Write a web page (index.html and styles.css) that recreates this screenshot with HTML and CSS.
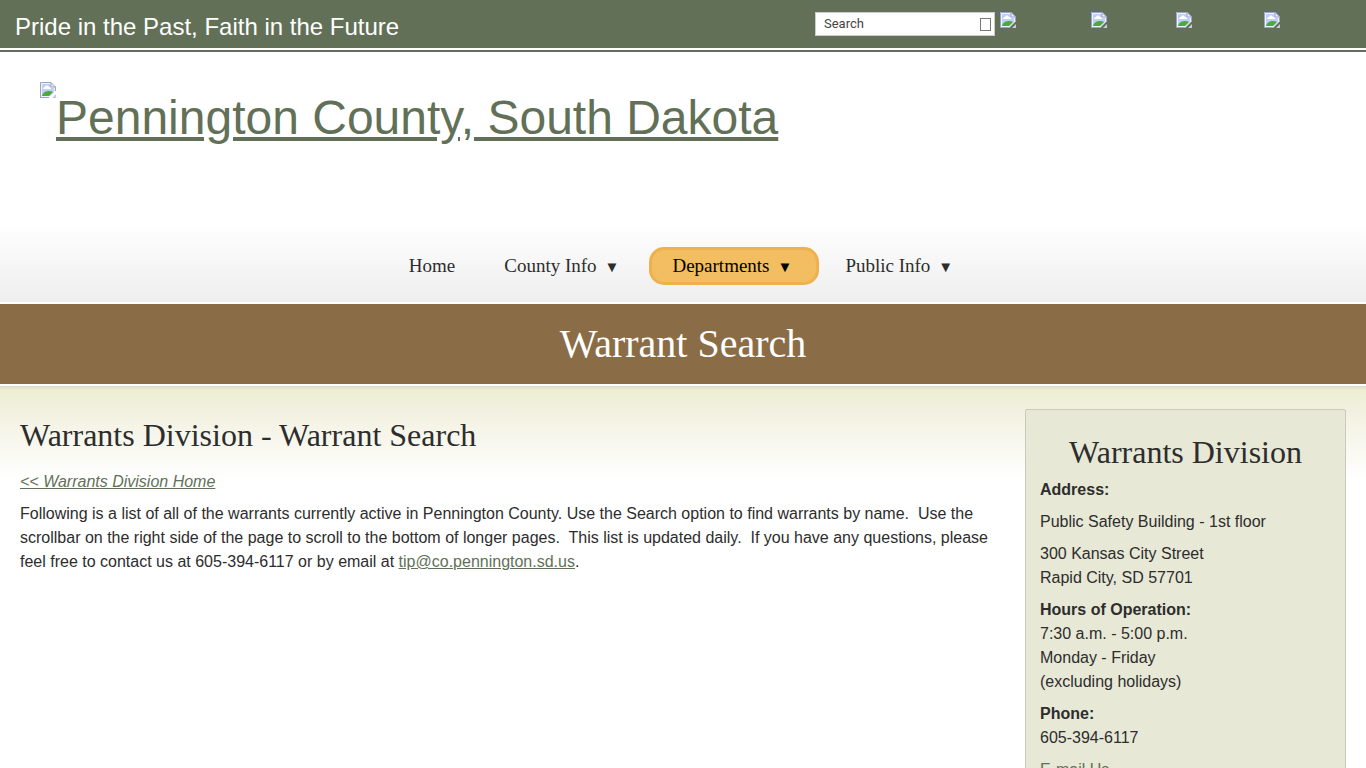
FILE: index.html
```html
<!DOCTYPE html>
<html lang="en">
<head>
    <meta charset="UTF-8">
    <meta name="viewport" content="width=device-width, initial-scale=1.0">
    <title>Warrant Search - Pennington County, South Dakota</title>
    <link rel="stylesheet" href="styles.css">
</head>
<body>
    <svg class="defs" aria-hidden="true">
        <symbol id="picture" viewBox="0 0 16 16">
            <path d="M0 0h11l5 5v4l-7 7H0z" fill="#f1f4fb"/>
            <path d="M2 2h9v4h3v4l-4 4H2z" fill="#c0d0f5"/>
            <path d="M3 7c0-1 1-2 2-2 1-2 3-2 4 0 1 0 2 1 2 2z" fill="#fff"/>
            <path d="M2 14c0-2 3-5 6-5 2 0 4 0 5 1l-4 4z" fill="#4fa83f"/>
            <path d="M.5 16V.5H11L15.500 5H11V.5M15.500 5v4M0 15.500h9" fill="none" stroke="#9aa3c4"/>
            <path d="M12 16l4-4v4z" fill="#c3cbdc"/>
        </symbol>
    </svg>

    <div class="topbar">
        <p class="slogan">Pride in the Past, Faith in the Future</p>
        <div class="tools">
            <form class="search">
                <input type="text" placeholder="Search" aria-label="Search">
                <button type="submit" aria-label="Go"><span class="glyph"></span></button>
            </form>
            <div class="social">
                <a href="#" aria-label="Facebook"><svg class="pic"><use href="#picture"/></svg></a>
                <a href="#" aria-label="Twitter"><svg class="pic"><use href="#picture"/></svg></a>
                <a href="#" aria-label="YouTube"><svg class="pic"><use href="#picture"/></svg></a>
                <a href="#" aria-label="Contact"><svg class="pic"><use href="#picture"/></svg></a>
            </div>
        </div>
    </div>

    <header class="header">
        <a class="logo" href="#"><svg class="pic"><use href="#picture"/></svg><span>Pennington County, South Dakota</span></a>
        <nav class="menu">
            <a href="#">Home</a>
            <a href="#">County Info<span class="arrow">▼</span></a>
            <a href="#" class="active">Departments<span class="arrow">▼</span></a>
            <a href="#">Public Info<span class="arrow">▼</span></a>
        </nav>
    </header>

    <div class="banner">
        <h1>Warrant Search</h1>
    </div>

    <div class="content">
        <main class="main">
            <h2>Warrants Division - Warrant Search</h2>
            <p><a href="#"><em>&lt;&lt; Warrants Division Home</em></a></p>
            <p>Following is a list of all of the warrants currently active in Pennington County. Use the Search option to find warrants by name.&nbsp; Use the scrollbar on the right side of the page to scroll to the bottom of longer pages.&nbsp; This list is updated daily.&nbsp; If you have any questions, please feel free to contact us at 605-394-6117 or by email at <a href="mailto:tip@co.pennington.sd.us">tip@co.pennington.sd.us</a>.</p>
        </main>
        <aside class="sidebar">
            <h2>Warrants Division</h2>
            <p><strong>Address:</strong></p>
            <p>Public Safety Building - 1st floor</p>
            <p>300 Kansas City Street<br>Rapid City, SD 57701</p>
            <p><strong>Hours of Operation:</strong><br>7:30 a.m. - 5:00 p.m.<br>Monday - Friday<br>(excluding holidays)</p>
            <p><strong>Phone:</strong><br>605-394-6117</p>
            <p><a href="#">E-mail Us</a></p>
        </aside>
    </div>
</body>
</html>
```

FILE: styles.css
```css
*{
    box-sizing: border-box;
}
body{
    margin: 0;
    background-color: #fff;
    color: #2d2d2d;
    font-family: "Liberation Sans", Arial, sans-serif;
    font-size: 16px;
    line-height: 24px;
}
a{
    color: #627057;
}
h1, h2{
    margin: 0;
    font-family: "Liberation Serif", "Times New Roman", serif;
    font-weight: normal;
}
p{
    margin: 0 0 8px;
}
.defs{
    display: block;
    width: 0;
    height: 0;
}
.pic{
    display: block;
    flex: none;
    width: 16px;
    height: 16px;
}

/* green bar */
.topbar{
    display: flex;
    justify-content: space-between;
    height: 48px;
    padding: 12px 15px 0;
    background-color: #627057;
}
.slogan{
    margin: 0;
    color: #fff;
    font-size: 24px;
    line-height: 30px;
}
.tools{
    display: flex;
    gap: 5px;
}
.search{
    display: flex;
    align-items: center;
    width: 180px;
    height: 24px;
    border: 1px solid #ccc;
    background-color: #fff;
}
.search input{
    flex: 1;
    min-width: 0;
    padding: 0 8px 2px;
    border: 0;
    background: none;
    font-family: Roboto, sans-serif;
    font-size: 13px;
}
.search input::placeholder{
    color: #444;
}
.search button{
    padding: 0 3px;
    border: 0;
    background: none;
}
.glyph{
    display: block;
    width: 11px;
    height: 13px;
    border: 1px solid #777;
}
.social{
    display: grid;
    grid-template-columns: 91px 85px 88px 87px;
}

/* logo and menu */
.header{
    margin-top: 2px;
    padding: 30px 40px 17px;
    border-top: 2px solid #666b60;
    background: linear-gradient(#fff 170px, #eee);
}
.logo{
    display: flex;
    height: 165px;
    font-size: 48px;
    line-height: 72px;
}
.menu{
    display: flex;
    justify-content: center;
    gap: 3px;
}
.menu a{
    padding: 0 20px;
    border: 3px solid transparent;
    border-radius: 15px;
    color: #2d2d2d;
    font-family: "Liberation Serif", "Times New Roman", serif;
    font-size: 19px;
    line-height: 32px;
    text-decoration: none;
}
.menu a.active{
    border-color: #efb04e;
    background-color: #f3bd62;
    color: #000;
}
.arrow{
    margin: 0 4px 0 8px;
    font-size: 15px;
    line-height: 1;
}

.banner{
    margin: 2px 0;
    padding: 16px;
    background-color: #8a6c46;
    color: #fff;
    text-align: center;
}
.banner h1{
    font-size: 40px;
    line-height: 48px;
}

/* page content */
.content{
    display: flex;
    gap: 31px;
    padding: 23px 20px 20px;
    background: linear-gradient(#dddcc8, #efeed2 4px, #f1f0de 20px, #fff 95px);
}
.main{
    flex: 1;
    padding-top: 5px;
}
.main h2, .sidebar h2{
    margin-bottom: 14px;
    font-size: 32px;
    line-height: 42px;
}
.sidebar{
    flex: none;
    width: 321px;
    padding: 21px 14px;
    border: 1px solid #c9cabb;
    border-radius: 2px;
    background-color: #e7e8d6;
}
.sidebar h2{
    margin-bottom: 5px;
    text-align: center;
}
.sidebar a{
    text-decoration: none;
}
```
